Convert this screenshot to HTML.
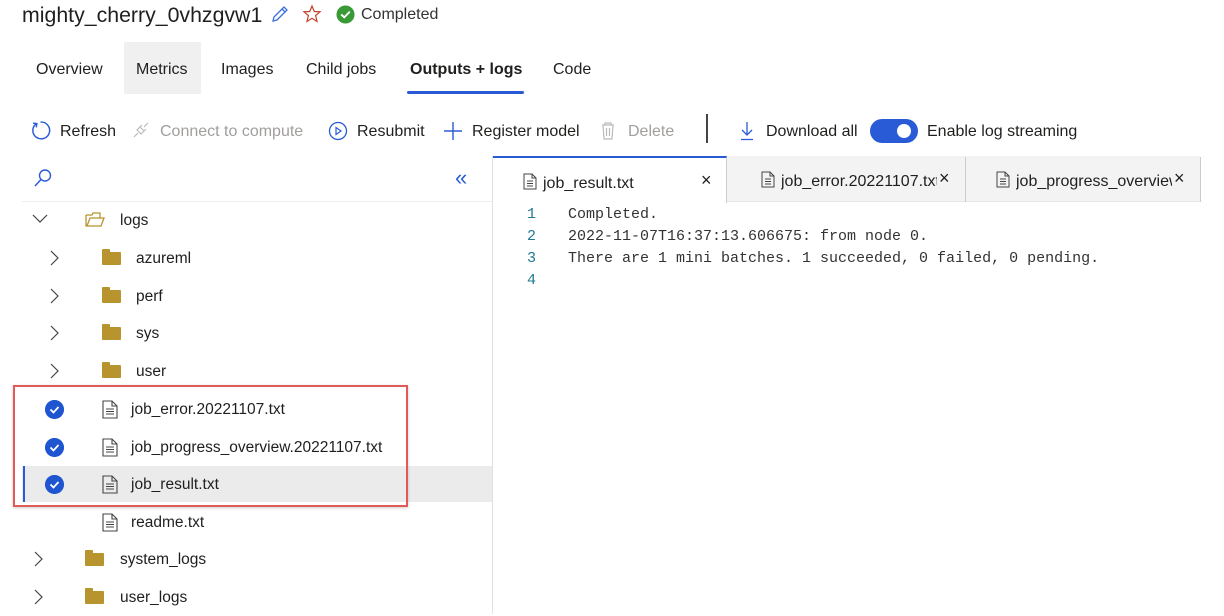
<!DOCTYPE html>
<html><head><meta charset="utf-8"><style>
*{margin:0;padding:0;box-sizing:border-box}
body{width:1224px;height:614px;background:#fff;font-family:"Liberation Sans",sans-serif;color:#201f1e;position:relative;overflow:hidden}
.a{position:absolute;white-space:nowrap}
.t16{font-size:16px}
.mono{font-family:"Liberation Mono",monospace;font-size:15px;color:#333}
.ln{font-family:"Liberation Mono",monospace;font-size:15px;color:#237893}
.row{position:absolute;left:0;width:492px;height:37px}
.lbl{position:absolute;font-size:15.5px;top:10px}
.fold{position:absolute;width:19px;height:13px;background:#b8942e;border-radius:1px;top:12px}
.fold:before{content:"";position:absolute;left:0;top:-3px;width:8px;height:4px;background:#b8942e;border-radius:1px 1px 0 0}
.chev{position:absolute;top:10px}
.chk{position:absolute;width:19px;height:19px;border-radius:50%;background:#1f55d0;top:9px;left:45px}
</style></head><body>
<div class="a" style="left:22px;top:3px;font-size:21.3px;color:#201f1e">mighty_cherry_0vhzgvw1</div>
<svg class="a" style="left:270px;top:4px" width="20" height="20" viewBox="0 0 20 20"><path d="M3 17 L4 13 L14 3 L17 6 L7 16 Z M12 5 L15 8" fill="none" stroke="#3a6fd8" stroke-width="1.3"/></svg>
<svg class="a" style="left:302px;top:4px" width="20" height="20" viewBox="0 0 20 20"><path d="M10 2 L12.3 7.5 L18 7.8 L13.6 11.5 L15 17.5 L10 14.3 L5 17.5 L6.4 11.5 L2 7.8 L7.7 7.5 Z" fill="none" stroke="#c0402a" stroke-width="1.2"/></svg>
<svg class="a" style="left:336px;top:5px" width="19" height="19" viewBox="0 0 20 20"><circle cx="10" cy="10" r="9.5" fill="#3a9a35"/><path d="M5.5 10 L8.7 13 L14.5 7" fill="none" stroke="#fff" stroke-width="2"/></svg>
<div class="a" style="left:361px;top:6px;font-size:16px;color:#333">Completed</div>

<div class="a" style="left:124px;top:42px;width:77px;height:52px;background:#f0f0f0"></div>
<div class="a t16" style="left:36px;top:61px">Overview</div>
<div class="a t16" style="left:136px;top:61px">Metrics</div>
<div class="a t16" style="left:221px;top:61px">Images</div>
<div class="a t16" style="left:306px;top:61px">Child jobs</div>
<div class="a t16" style="left:410px;top:61px;font-weight:bold">Outputs + logs</div>
<div class="a" style="left:407px;top:91px;width:117px;height:3px;background:#2a5bd7;border-radius:2px"></div>
<div class="a t16" style="left:553px;top:61px">Code</div>

<svg class="a" style="left:30px;top:120px" width="21" height="21" viewBox="0 0 20 20"><path d="M6 3.5 A8 8 0 1 0 10 2" fill="none" stroke="#2a5bd7" stroke-width="1.4"/><path d="M3 3 L6.5 3.5 L6 7" fill="none" stroke="#2a5bd7" stroke-width="1.4"/></svg>
<div class="a t16" style="left:60px;top:123px">Refresh</div>
<svg class="a" style="left:132px;top:121px" width="18" height="18" viewBox="0 0 18 18"><path d="M2 16 L6 12 M12 6 L16 2 M5 9 L9 13 L12 10 L8 6 Z M7 7 L10 4 M11 11 L14 8" fill="none" stroke="#bbb" stroke-width="1.2"/></svg>
<div class="a t16" style="left:160px;top:123px;color:#a19f9d">Connect to compute</div>
<svg class="a" style="left:328px;top:121px" width="20" height="20" viewBox="0 0 20 20"><circle cx="10" cy="10" r="8.5" fill="none" stroke="#2a5bd7" stroke-width="1.3"/><path d="M8 6.5 L13 10 L8 13.5 Z" fill="none" stroke="#2a5bd7" stroke-width="1.2"/></svg>
<div class="a t16" style="left:357px;top:123px">Resubmit</div>
<svg class="a" style="left:443px;top:121px" width="20" height="20" viewBox="0 0 20 20"><path d="M10 1 V19 M1 10 H19" stroke="#2a5bd7" stroke-width="1.4"/></svg>
<div class="a t16" style="left:472px;top:123px">Register model</div>
<svg class="a" style="left:600px;top:121px" width="16" height="20" viewBox="0 0 16 20"><path d="M2 4 H14 M5 4 V2 H11 V4 M3 4 L4 18 H12 L13 4 M6.5 7 V15 M9.5 7 V15" fill="none" stroke="#bbb" stroke-width="1.2"/></svg>
<div class="a t16" style="left:628px;top:123px;color:#a19f9d">Delete</div>
<div class="a" style="left:706px;top:114px;width:2px;height:29px;background:#444"></div>
<svg class="a" style="left:738px;top:121px" width="18" height="20" viewBox="0 0 18 20"><path d="M9 1 V14 M4 9 L9 14 L14 9 M3 18.5 H15" fill="none" stroke="#2a5bd7" stroke-width="1.3"/></svg>
<div class="a t16" style="left:766px;top:123px">Download all</div>
<div class="a" style="left:870px;top:119px;width:48px;height:24px;border-radius:12px;background:#2a5bd7"></div>
<div class="a" style="left:897px;top:124px;width:14px;height:14px;border-radius:50%;background:#fff"></div>
<div class="a t16" style="left:927px;top:123px">Enable log streaming</div>

<svg class="a" style="left:33px;top:168px" width="20" height="20" viewBox="0 0 20 20"><circle cx="12" cy="7.5" r="5.5" fill="none" stroke="#2a5bd7" stroke-width="1.4"/><path d="M8 11.5 L2 18" stroke="#2a5bd7" stroke-width="1.5"/></svg>
<div class="a" style="left:455px;top:165px;font-size:22px;color:#2a5bd7">«</div>
<div class="a" style="left:22px;top:201px;width:470px;height:1px;background:#eee"></div>
<div class="a" style="left:492px;top:156px;width:1px;height:458px;background:#e1e1e1"></div>

<div class="a" style="left:493px;top:156px;width:707px;height:46px;background:#f3f3f3;border-bottom:1px solid #e5e5e5"></div>
<div class="a" style="left:493px;top:156px;width:234px;height:47px;background:#fff;border-top:2px solid #2a5bd7;border-right:1px solid #ccc"></div>
<div class="a" style="left:965px;top:157px;width:1px;height:45px;background:#ccc"></div>
<div class="a" style="left:1200px;top:157px;width:1px;height:45px;background:#ccc"></div>
<svg class="a" style="left:523px;top:173px" width="14" height="17" viewBox="0 0 14 17"><path d="M1 1 H9 L13 5 V16 H1 Z M9 1 V5 H13 M4 8 H10 M4 10.5 H10 M4 13 H10" fill="none" stroke="#444" stroke-width="1"/></svg>
<div class="a t16" style="left:543px;top:175px">job_result.txt</div>
<div class="a" style="left:701px;top:170px;font-size:18px">×</div>
<svg class="a" style="left:761px;top:171px" width="14" height="17" viewBox="0 0 14 17"><path d="M1 1 H9 L13 5 V16 H1 Z M9 1 V5 H13 M4 8 H10 M4 10.5 H10 M4 13 H10" fill="none" stroke="#444" stroke-width="1"/></svg>
<div class="a t16" style="left:781px;top:173px;width:156px;overflow:hidden">job_error.20221107.txt</div>
<div class="a" style="left:939px;top:168px;font-size:18px">×</div>
<svg class="a" style="left:996px;top:171px" width="14" height="17" viewBox="0 0 14 17"><path d="M1 1 H9 L13 5 V16 H1 Z M9 1 V5 H13 M4 8 H10 M4 10.5 H10 M4 13 H10" fill="none" stroke="#444" stroke-width="1"/></svg>
<div class="a t16" style="left:1016px;top:173px;width:156px;overflow:hidden">job_progress_overview.20221107.txt</div>
<div class="a" style="left:1174px;top:168px;font-size:18px">×</div>

<div class="a ln" style="left:527px;top:206px">1</div><div class="a mono" style="left:568px;top:206px">Completed.</div>
<div class="a ln" style="left:527px;top:228px">2</div><div class="a mono" style="left:568px;top:228px">2022-11-07T16:37:13.606675: from node 0.</div>
<div class="a ln" style="left:527px;top:250px">3</div><div class="a mono" style="left:568px;top:250px">There are 1 mini batches. 1 succeeded, 0 failed, 0 pending.</div>
<div class="a ln" style="left:527px;top:272px">4</div>

<div class="row" style="top:202px"><svg class="chev" style="left:32px;top:12px" width="16" height="10" viewBox="0 0 16 10"><path d="M1 1 L8 8 L15 1" fill="none" stroke="#444" stroke-width="1.2"/></svg>
<svg class="a" style="left:85px;top:10px" width="20" height="16" viewBox="0 0 20 16"><path d="M1 3 V14 H16 L19 6 H5 L2 14 M1 3 H7 L8 1 H15 V6" fill="none" stroke="#b8942e" stroke-width="1.3"/></svg>
<div class="lbl" style="left:120px">logs</div></div>
<div class="row" style="top:240px"><svg class="chev" style="left:50px" width="10" height="16" viewBox="0 0 10 16"><path d="M1 1 L8 8 L1 15" fill="none" stroke="#444" stroke-width="1.2"/></svg><div class="fold" style="left:102px"></div><div class="lbl" style="left:136px">azureml</div></div>
<div class="row" style="top:278px"><svg class="chev" style="left:50px" width="10" height="16" viewBox="0 0 10 16"><path d="M1 1 L8 8 L1 15" fill="none" stroke="#444" stroke-width="1.2"/></svg><div class="fold" style="left:102px"></div><div class="lbl" style="left:136px">perf</div></div>
<div class="row" style="top:315px"><svg class="chev" style="left:50px" width="10" height="16" viewBox="0 0 10 16"><path d="M1 1 L8 8 L1 15" fill="none" stroke="#444" stroke-width="1.2"/></svg><div class="fold" style="left:102px"></div><div class="lbl" style="left:136px">sys</div></div>
<div class="row" style="top:353px"><svg class="chev" style="left:50px" width="10" height="16" viewBox="0 0 10 16"><path d="M1 1 L8 8 L1 15" fill="none" stroke="#444" stroke-width="1.2"/></svg><div class="fold" style="left:102px"></div><div class="lbl" style="left:136px">user</div></div>

<div class="a" style="left:22px;top:466px;width:470px;height:36px;background:#ebebeb"></div>
<div class="a" style="left:23px;top:466px;width:2px;height:36px;background:#2a5bd7"></div>

<div class="row" style="top:391px"><svg class="chk" viewBox="0 0 19 19"><circle cx="9.5" cy="9.5" r="9.5" fill="#1f55d0"/><path d="M5.5 9.5 L8.5 12.5 L13.5 7" fill="none" stroke="#fff" stroke-width="1.8"/></svg>
<svg class="a" style="left:102px;top:9px" width="16" height="19" viewBox="0 0 16 19"><path d="M1 1 H10 L15 6 V18 H1 Z M10 1 V6 H15 M4 9 H12 M4 11.5 H12 M4 14 H12" fill="none" stroke="#444" stroke-width="1.1"/></svg><div class="lbl" style="left:131px">job_error.20221107.txt</div></div>
<div class="row" style="top:429px"><svg class="chk" viewBox="0 0 19 19"><circle cx="9.5" cy="9.5" r="9.5" fill="#1f55d0"/><path d="M5.5 9.5 L8.5 12.5 L13.5 7" fill="none" stroke="#fff" stroke-width="1.8"/></svg>
<svg class="a" style="left:102px;top:9px" width="16" height="19" viewBox="0 0 16 19"><path d="M1 1 H10 L15 6 V18 H1 Z M10 1 V6 H15 M4 9 H12 M4 11.5 H12 M4 14 H12" fill="none" stroke="#444" stroke-width="1.1"/></svg><div class="lbl" style="left:131px">job_progress_overview.20221107.txt</div></div>
<div class="row" style="top:466px"><svg class="chk" viewBox="0 0 19 19"><circle cx="9.5" cy="9.5" r="9.5" fill="#1f55d0"/><path d="M5.5 9.5 L8.5 12.5 L13.5 7" fill="none" stroke="#fff" stroke-width="1.8"/></svg>
<svg class="a" style="left:102px;top:9px" width="16" height="19" viewBox="0 0 16 19"><path d="M1 1 H10 L15 6 V18 H1 Z M10 1 V6 H15 M4 9 H12 M4 11.5 H12 M4 14 H12" fill="none" stroke="#444" stroke-width="1.1"/></svg><div class="lbl" style="left:131px">job_result.txt</div></div>
<div class="row" style="top:504px"><svg class="a" style="left:102px;top:9px" width="16" height="19" viewBox="0 0 16 19"><path d="M1 1 H10 L15 6 V18 H1 Z M10 1 V6 H15 M4 9 H12 M4 11.5 H12 M4 14 H12" fill="none" stroke="#444" stroke-width="1.1"/></svg><div class="lbl" style="left:131px">readme.txt</div></div>
<div class="row" style="top:541px"><svg class="chev" style="left:34px" width="10" height="16" viewBox="0 0 10 16"><path d="M1 1 L8 8 L1 15" fill="none" stroke="#444" stroke-width="1.2"/></svg><div class="fold" style="left:85px"></div><div class="lbl" style="left:120px">system_logs</div></div>
<div class="row" style="top:579px"><svg class="chev" style="left:34px" width="10" height="16" viewBox="0 0 10 16"><path d="M1 1 L8 8 L1 15" fill="none" stroke="#444" stroke-width="1.2"/></svg><div class="fold" style="left:85px"></div><div class="lbl" style="left:120px">user_logs</div></div>

<div class="a" style="left:13px;top:385px;width:395px;height:122px;border:2px solid #e05a5a;box-shadow:0 1px 3px rgba(0,0,0,.2)"></div>
</body></html>
